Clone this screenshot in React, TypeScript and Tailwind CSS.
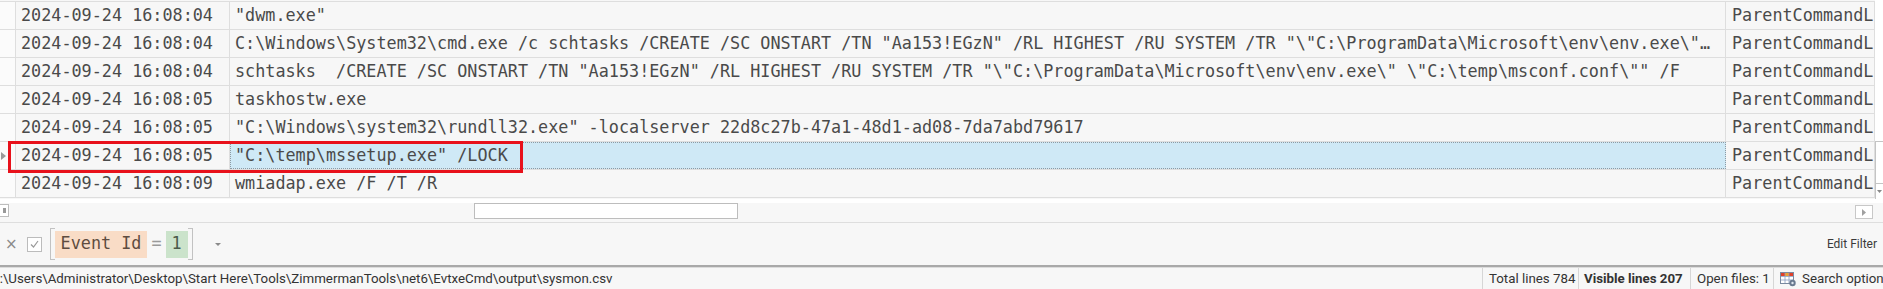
import React from 'react'

const rows = [
  { time: '2024-09-24 16:08:04', cmd: String.raw`"dwm.exe"` },
  {
    time: '2024-09-24 16:08:04',
    cmd: String.raw`C:\Windows\System32\cmd.exe /c schtasks /CREATE /SC ONSTART /TN "Aa153!EGzN" /RL HIGHEST /RU SYSTEM /TR "\"C:\ProgramData\Microsoft\env\env.exe\"…`,
  },
  {
    time: '2024-09-24 16:08:04',
    cmd: String.raw`schtasks  /CREATE /SC ONSTART /TN "Aa153!EGzN" /RL HIGHEST /RU SYSTEM /TR "\"C:\ProgramData\Microsoft\env\env.exe\" \"C:\temp\msconf.conf\"" /F`,
  },
  { time: '2024-09-24 16:08:05', cmd: 'taskhostw.exe' },
  {
    time: '2024-09-24 16:08:05',
    cmd: String.raw`"C:\Windows\system32\rundll32.exe" -localserver 22d8c27b-47a1-48d1-ad08-7da7abd79617`,
  },
  { time: '2024-09-24 16:08:05', cmd: String.raw`"C:\temp\mssetup.exe" /LOCK`, selected: true },
  { time: '2024-09-24 16:08:09', cmd: 'wmiadap.exe /F /T /R' },
]

const Row = ({ time, cmd, selected }: { time: string; cmd: string; selected?: boolean }) => {
  return (
    <div className="flex h-[28px] border-t border-[#dedede]">
      <div className="flex w-[16px] shrink-0 items-center border-r border-[#dedede] bg-[#fbfbfb]">
        {selected && (
          <svg width="6" height="8" viewBox="0 0 6 8" className="ml-[1px]">
            <path d="M0 0 L5 4 L0 8 Z" fill="#9a9a9a" />
          </svg>
        )}
      </div>
      <div className="flex w-[214px] shrink-0 items-center border-r border-[#dedede] pl-[5px]">
        {time}
      </div>
      <div
        className={
          selected
            ? 'flex w-[1496px] shrink-0 items-center overflow-hidden whitespace-pre border border-dotted border-[#8d9aa3] bg-[#cfe9f6] pl-[4px]'
            : 'flex w-[1496px] shrink-0 items-center overflow-hidden whitespace-pre border-r border-[#dedede] pl-[5px]'
        }
      >
        {cmd}
      </div>
      <div className="flex w-[149px] shrink-0 items-center overflow-hidden whitespace-pre border-r border-[#dedede] pl-[6px]">
        ParentCommandLine:
      </div>
    </div>
  )
}

const App = () => {
  return (
    <div className="relative h-[289px] w-[1883px] overflow-hidden bg-[#f7f7f7]">
      {/* grid */}
      <div className="flex font-['DejaVu_Sans_Mono',monospace] text-[16.8px] text-[#4a4a4a]">
        <div className="w-[1875px] shrink-0">
          <div className="h-[1px]" />
          {rows.map((r, i) => (
            <Row key={i} {...r} />
          ))}
          <div className="h-[1px] bg-[#dedede]" />
        </div>
        <div className="flex flex-1 flex-col bg-white">
          <div className="h-[141px]" />
          <div className="h-[42px] border-l border-t border-[#c4c4c4] bg-white" />
          <div className="flex h-[16px] items-center justify-center border-l border-t border-[#c4c4c4]">
            <svg width="5" height="3" viewBox="0 0 5 3">
              <path d="M0 0 L5 0 L2.5 3 Z" fill="#888" />
            </svg>
          </div>
        </div>
      </div>

      {/* horizontal scrollbar */}
      <div className="flex h-[24px] items-start border-b border-[#dedede] border-t-[4px] border-t-white">
        <div className="mt-[1px] flex h-[13px] w-[9px] items-center justify-end border-y border-r border-[#bdbdbd] bg-white pr-[2px]">
          <div className="h-[5px] w-[3px] bg-[#999]" />
        </div>
        <div className="ml-[465px] h-[16px] w-[264px] border border-[#bdbdbd] bg-white" />
        <div className="ml-auto mr-[10px] mt-[2px] flex h-[14px] w-[18px] items-center justify-center border border-[#c8c8c8] bg-white">
          <svg width="4" height="7" viewBox="0 0 4 7">
            <path d="M0 0 L4 3.5 L0 7 Z" fill="#a0a0a0" />
          </svg>
        </div>
      </div>

      {/* filter panel */}
      <div className="flex h-[42px] items-center">
        <span className="ml-[5px] font-['DejaVu_Sans',sans-serif] text-[15px] leading-none text-[#8a8a8a]">×</span>
        <div className="ml-[9px] flex h-[15px] w-[15px] items-center justify-center border border-[#bcbcbc] bg-white">
          <svg width="9" height="8" viewBox="0 0 9 8">
            <path d="M1 4.5 L3.5 7 L8 1" fill="none" stroke="#9a9a9a" strokeWidth="1.2" />
          </svg>
        </div>
        <div className="ml-[8px] h-[32px] w-[5px] border-y border-l border-[#c2c2c2]" />
        <div className="flex h-[27px] items-center font-['DejaVu_Sans_Mono',monospace] text-[16.8px]">
          <span className="flex h-full items-center bg-[#f9dcc6] pl-[6px] pr-[6px] text-[#5e4c40]">Event Id</span>
          <span className="px-[4px] text-[#9a9a9a]">=</span>
          <span className="flex h-full items-center bg-[#cbe3cb] px-[6px] text-[#4a5a4a]">1</span>
        </div>
        <div className="h-[32px] w-[5px] border-y border-r border-[#c2c2c2]" />
        <svg width="6" height="3" viewBox="0 0 6 3" className="ml-[22px]">
          <path d="M0 0 L6 0 L3 3 Z" fill="#8a8a8a" />
        </svg>
        <span className="ml-auto mr-[6px] font-['Roboto',sans-serif] text-[12px] text-[#3a3a3a]">Edit Filter</span>
      </div>

      {/* status bar */}
      <div className="border-t-2 border-[#a9a9a9]" />
      <div className="border-t border-[#dcdcdc]" />
      <div className="flex h-[22px] items-center whitespace-nowrap font-['Roboto',sans-serif] text-[13.3px] text-[#333]">
        <div className="-ml-[9px] flex-1 overflow-hidden">
          {String.raw`C:\Users\Administrator\Desktop\Start Here\Tools\ZimmermanTools\net6\EvtxeCmd\output\sysmon.csv`}
        </div>
        <div className="flex h-full w-[96px] items-center border-l border-[#d6d6d6] pl-[6px]">Total lines 784</div>
        <div className="flex h-full w-[112px] items-center border-l border-[#d6d6d6] pl-[5px] font-bold">Visible lines 207</div>
        <div className="flex h-full w-[83px] items-center border-l border-[#d6d6d6] pl-[6px]">Open files: 1</div>
        <div className="flex h-full w-[110px] shrink-0 items-center gap-[5px] overflow-hidden border-l border-[#d6d6d6] pl-[6px]">
          <svg width="17" height="15" viewBox="0 0 17 15" className="shrink-0">
            <rect x="0.5" y="0.5" width="13" height="11" fill="#fff" stroke="#7a8aa0" />
            <rect x="1" y="1" width="4" height="3" fill="#e0402a" />
            <rect x="5" y="1" width="4" height="3" fill="#f0a030" />
            <rect x="9" y="1" width="4" height="3" fill="#e0402a" />
            <path d="M1 4.5 H13 M1 8 H13 M5 1 V11 M9 1 V11" stroke="#8aa0c0" strokeWidth="0.8" />
            <circle cx="12.5" cy="11" r="3.2" fill="#6a7a90" />
            <circle cx="12.5" cy="11" r="1.2" fill="#dfe6ee" />
          </svg>
          <span>Search options</span>
        </div>
      </div>

      {/* highlight annotation */}
      <div className="absolute left-[8px] top-[141px] h-[32px] w-[515px] border-[3px] border-[#e8111b]" />
    </div>
  )
}

export default App
